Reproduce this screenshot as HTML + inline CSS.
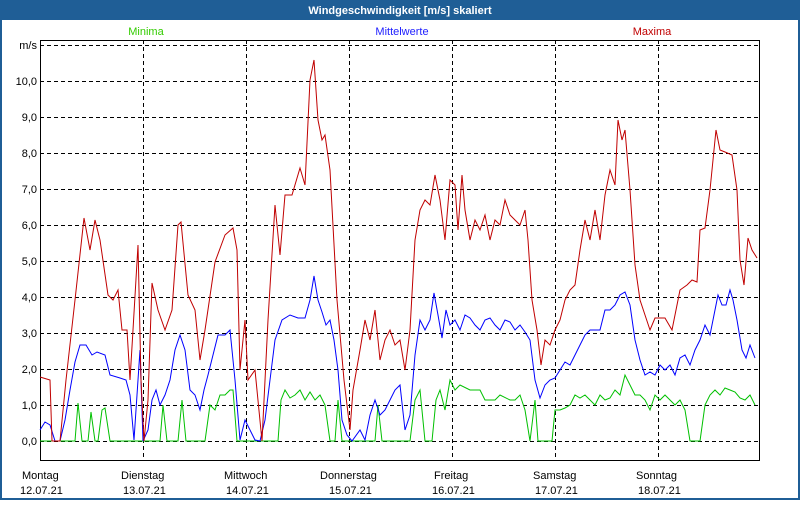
<!DOCTYPE html>
<html><head><meta charset="utf-8"><style>
body{margin:0;width:800px;height:500px;overflow:hidden;font-family:"Liberation Sans",sans-serif;}
</style></head><body>
<svg width="800" height="500" xmlns="http://www.w3.org/2000/svg" font-family="Liberation Sans, sans-serif" font-size="11">
<rect x="0" y="0" width="800" height="500" fill="#1f5e96"/>
<rect x="2" y="20" width="796" height="478" fill="#fff"/>
<text x="400" y="14" text-anchor="middle" fill="#fff" font-weight="bold" font-size="11">Windgeschwindigkeit [m/s] skaliert</text>
<text x="146" y="35" text-anchor="middle" fill="#33cc00">Minima</text>
<text x="402" y="35" text-anchor="middle" fill="#2020ff">Mittelwerte</text>
<text x="652" y="35" text-anchor="middle" fill="#c00000">Maxima</text>
<g stroke="#000" stroke-dasharray="4,3" stroke-width="1">
<line x1="40" y1="45.5" x2="760" y2="45.5"/><line x1="40" y1="81.5" x2="760" y2="81.5"/><line x1="40" y1="117.5" x2="760" y2="117.5"/><line x1="40" y1="153.5" x2="760" y2="153.5"/><line x1="40" y1="189.5" x2="760" y2="189.5"/><line x1="40" y1="225.5" x2="760" y2="225.5"/><line x1="40" y1="261.5" x2="760" y2="261.5"/><line x1="40" y1="297.5" x2="760" y2="297.5"/><line x1="40" y1="333.5" x2="760" y2="333.5"/><line x1="40" y1="369.5" x2="760" y2="369.5"/><line x1="40" y1="405.5" x2="760" y2="405.5"/><line x1="40" y1="441.5" x2="760" y2="441.5"/>
<line x1="143.5" y1="40" x2="143.5" y2="460"/><line x1="246.5" y1="40" x2="246.5" y2="460"/><line x1="349.5" y1="40" x2="349.5" y2="460"/><line x1="452.5" y1="40" x2="452.5" y2="460"/><line x1="555.5" y1="40" x2="555.5" y2="460"/><line x1="658.5" y1="40" x2="658.5" y2="460"/>
</g>
<rect x="40.5" y="40.5" width="719" height="420" fill="none" stroke="#000"/>
<g text-anchor="end" fill="#000">
<text x="37" y="49">m/s</text><text x="37" y="85">10,0</text><text x="37" y="121">9,0</text><text x="37" y="157">8,0</text><text x="37" y="193">7,0</text><text x="37" y="229">6,0</text><text x="37" y="265">5,0</text><text x="37" y="301">4,0</text><text x="37" y="337">3,0</text><text x="37" y="373">2,0</text><text x="37" y="409">1,0</text><text x="37" y="445">0,0</text>
</g>
<g fill="#000">
<text x="22" y="479">Montag</text><text x="20" y="494">12.07.21</text>
<text x="121" y="479">Dienstag</text><text x="123" y="494">13.07.21</text>
<text x="224" y="479">Mittwoch</text><text x="226" y="494">14.07.21</text>
<text x="320" y="479">Donnerstag</text><text x="329" y="494">15.07.21</text>
<text x="434" y="479">Freitag</text><text x="432" y="494">16.07.21</text>
<text x="533" y="479">Samstag</text><text x="535" y="494">17.07.21</text>
<text x="636" y="479">Sonntag</text><text x="638" y="494">18.07.21</text>
</g>
<g fill="none" stroke-width="1">
<polyline stroke="#00c000" points="40,441 75,441 78,403 82,441 88,441 91,412 95,441 98,441 102,410 105,408 110,441 160,441 163,405 167,441 178,441 182,400 186,441 205,441 210,405 215,410 220,395 225,395 230,390 233,390 237,441 278,441 281,400 285,390 290,398 295,395 300,390 305,400 310,392 315,400 320,395 325,405 330,441 335,441 338,400 342,441 375,441 378,405 382,441 410,441 415,400 420,390 425,441 432,441 436,400 440,390 445,410 450,380 455,390 460,385 470,390 480,390 485,400 495,400 500,395 510,400 515,400 520,395 525,410 530,441 535,400 538,441 552,441 555,410 560,410 565,408 570,405 575,395 580,398 585,395 590,400 595,405 600,395 605,400 610,398 615,390 620,395 625,375 630,385 635,395 640,395 645,400 650,410 655,395 660,400 665,395 670,400 675,405 680,400 685,410 690,441 700,441 705,405 710,395 715,390 720,395 725,388 730,390 735,392 740,398 745,400 750,395 755,405"/>
<polyline stroke="#0000ff" points="40,430 45,422 50,425 55,441 60,441 65,420 70,390 75,362 80,345 86,345 92,355 97,352 105,355 110,375 120,378 126,380 130,395 134,440 138,380 140,350 143,441 148,430 152,400 156,390 160,405 165,395 170,380 175,350 180,335 185,350 190,390 195,395 200,410 204,390 208,375 213,355 218,335 225,335 230,330 235,380 240,440 245,420 250,430 255,440 260,441 265,420 270,380 275,340 282,320 290,315 298,318 305,318 310,300 314,276 318,300 322,312 326,325 330,320 334,340 338,370 342,420 347,435 352,441 360,430 365,440 370,415 375,400 380,415 385,410 390,400 395,390 400,385 405,430 410,415 415,355 420,320 425,330 430,320 434,293 438,315 442,338 446,310 450,325 455,320 460,330 465,315 470,318 475,325 480,330 485,320 490,318 495,325 500,330 505,320 510,322 515,330 520,325 525,332 530,340 535,380 540,398 545,385 550,380 555,378 560,370 565,362 570,365 575,355 580,345 585,335 590,330 595,330 600,330 605,310 610,310 615,305 620,295 625,292 630,305 635,340 640,360 645,375 650,372 655,375 660,365 665,370 670,365 675,375 680,358 685,355 690,365 695,350 700,340 705,325 710,335 715,310 718,295 722,305 726,305 730,290 733,300 737,320 742,350 746,358 750,345 755,358"/>
<polyline stroke="#c00000" points="40,377 50,380 52,441 60,441 66,380 75,300 84,218 90,250 95,220 100,240 108,295 113,300 118,290 122,330 127,330 130,380 133,330 138,245 141,380 144,441 148,400 152,283 158,310 165,330 172,310 178,225 181,222 188,295 195,310 200,360 205,330 215,262 225,235 233,228 237,250 240,370 245,320 248,380 255,370 262,441 268,320 275,205 280,255 285,195 292,195 300,168 305,185 310,80 314,60 318,120 322,140 325,135 330,170 337,300 344,380 350,430 353,390 360,350 365,320 370,340 375,310 380,360 385,340 390,330 395,345 400,340 405,370 410,330 415,240 420,210 425,200 430,205 435,175 440,200 445,240 450,180 455,185 458,230 462,175 465,210 470,240 475,220 480,230 485,215 490,240 495,220 500,225 505,200 510,215 515,220 520,225 525,210 528,240 532,300 537,330 541,365 545,340 550,345 555,330 560,320 565,300 570,290 575,285 580,250 585,220 590,240 595,210 600,240 605,195 610,170 615,185 618,120 622,140 625,130 630,190 635,265 640,300 645,315 650,330 655,318 665,318 672,330 676,310 680,290 687,285 692,280 697,282 700,230 705,228 710,190 716,130 720,150 725,152 732,155 737,190 740,260 744,285 748,238 752,250 757,258"/>
</g>
</svg>
</body></html>
